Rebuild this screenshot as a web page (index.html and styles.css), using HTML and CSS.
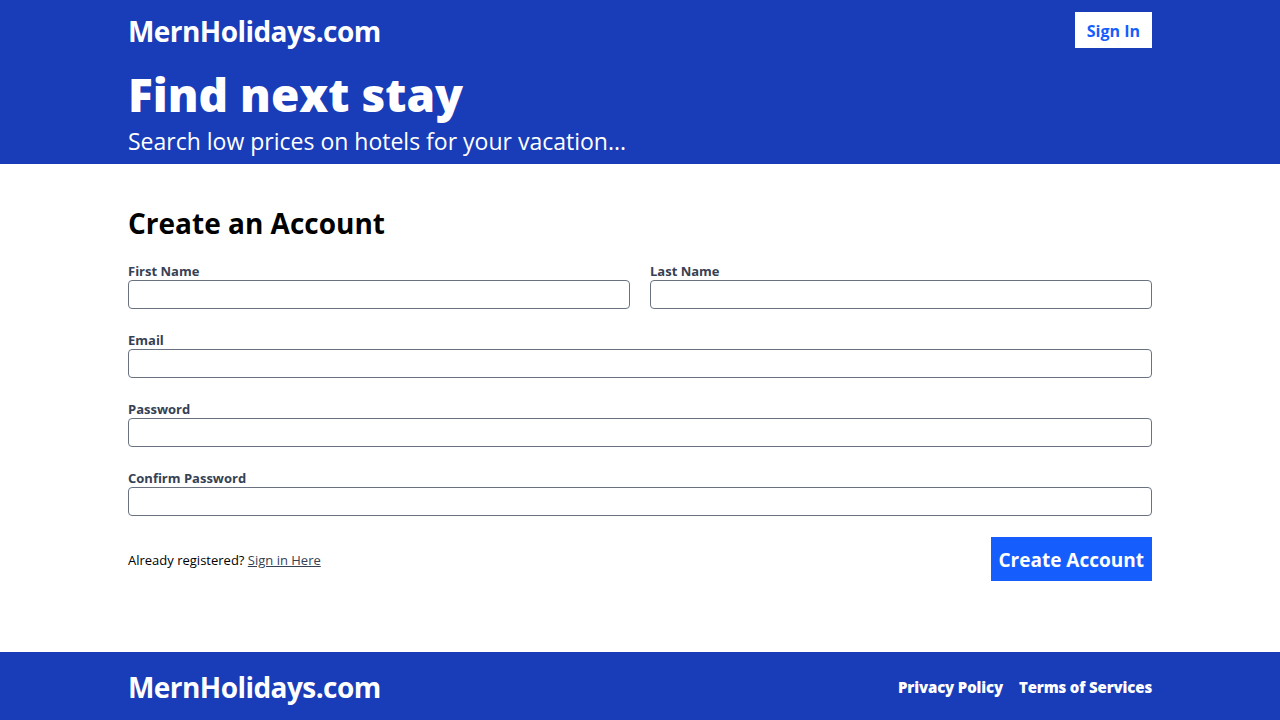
FILE: index.html
```html
<!DOCTYPE html>
<html lang="en">
<head>
<meta charset="utf-8">
<meta name="viewport" content="width=device-width, initial-scale=1">
<title>MernHolidays.com</title>
<link rel="stylesheet" href="styles.css">
</head>
<body>
<header class="header">
  <div class="container nav">
    <a class="brand" href="#">MernHolidays.com</a>
    <a class="sign-in" href="#">Sign In</a>
  </div>
  <div class="container hero">
    <h1 class="hero-title">Find next stay</h1>
    <p class="hero-text">Search low prices on hotels for your vacation...</p>
  </div>
</header>
<main class="container main">
  <form class="form">
    <h2 class="form-title">Create an Account</h2>
    <div class="row">
      <label class="field">First Name<input class="input" type="text" name="firstName"></label>
      <label class="field">Last Name<input class="input" type="text" name="lastName"></label>
    </div>
    <label class="field">Email<input class="input" type="email" name="email"></label>
    <label class="field">Password<input class="input" type="password" name="password"></label>
    <label class="field">Confirm Password<input class="input" type="password" name="confirmPassword"></label>
    <div class="actions">
      <span class="hint">Already registered? <a class="hint-link" href="#">Sign in Here</a></span>
      <button class="submit" type="submit">Create Account</button>
    </div>
  </form>
</main>
<footer class="footer">
  <div class="container footer-inner">
    <a class="brand" href="#">MernHolidays.com</a>
    <nav class="footer-links">
      <a class="footer-link" href="#">Privacy Policy</a>
      <a class="footer-link" href="#">Terms of Services</a>
    </nav>
  </div>
</footer>
</body>
</html>
```
FILE: styles.css
```css
* { box-sizing: border-box; }
body {
  margin: 0;
  min-height: 100vh;
  display: flex;
  flex-direction: column;
  background: #fff;
  color: #000;
  font: 16px/24px "Open Sans", "Noto Sans", sans-serif;
}
h1, h2, p { margin: 0; }
.container { width: 80%; margin: 0 auto; }
.header, .footer { background: #193cb8; color: #fff; }
.header { padding: 12px 0 6px; }
.nav, .footer-inner, .actions {
  display: flex;
  align-items: center;
  justify-content: space-between;
}
.brand {
  padding: 3px 0 1px;
  color: inherit;
  font-size: 28px;
  line-height: 32px;
  font-weight: 700;
  letter-spacing: -0.02em;
  text-decoration: none;
}
.sign-in {
  padding: 7px 12px 5px;
  background: #fff;
  color: #155dfc;
  font-weight: 700;
  text-decoration: none;
}
.hero { padding-top: 23px; }
.hero-title { font-size: 46px; line-height: 46px; font-weight: 800; }
.hero-text { padding: 8px 0 1px; font-size: 23px; line-height: 32px; }
.main { flex: 1; padding: 40px 0; }
.form { display: flex; flex-direction: column; gap: 20px; }
.form-title { padding: 3px 0 1px; font-size: 28px; line-height: 32px; font-weight: 700; }
.row { display: flex; gap: 20px; }
.field {
  flex: 1;
  padding-top: 2px;
  color: #364153;
  font-size: 13px;
  line-height: 18px;
  font-weight: 700;
}
.input {
  display: block;
  width: 100%;
  height: 29px;
  padding: 4px 8px;
  border: 1px solid #6a7282;
  border-radius: 4px;
  background: #fff;
  font: inherit;
  font-weight: 400;
}
.actions { padding-top: 1px; }
.hint { padding-top: 2px; font-size: 13px; line-height: 20px; }
.hint-link { color: #364153; }
.submit {
  padding: 9px 8px 7px;
  border: 0;
  background: #155dfc;
  color: #fff;
  font: 700 19px/28px "Open Sans", "Noto Sans", sans-serif;
}
.footer { padding: 16px 0; }
.footer-links { display: flex; gap: 16px; padding-top: 2px; }
.footer-link {
  color: inherit;
  font-size: 15px;
  font-weight: 800;
  letter-spacing: -0.01em;
  text-decoration: none;
}
```
